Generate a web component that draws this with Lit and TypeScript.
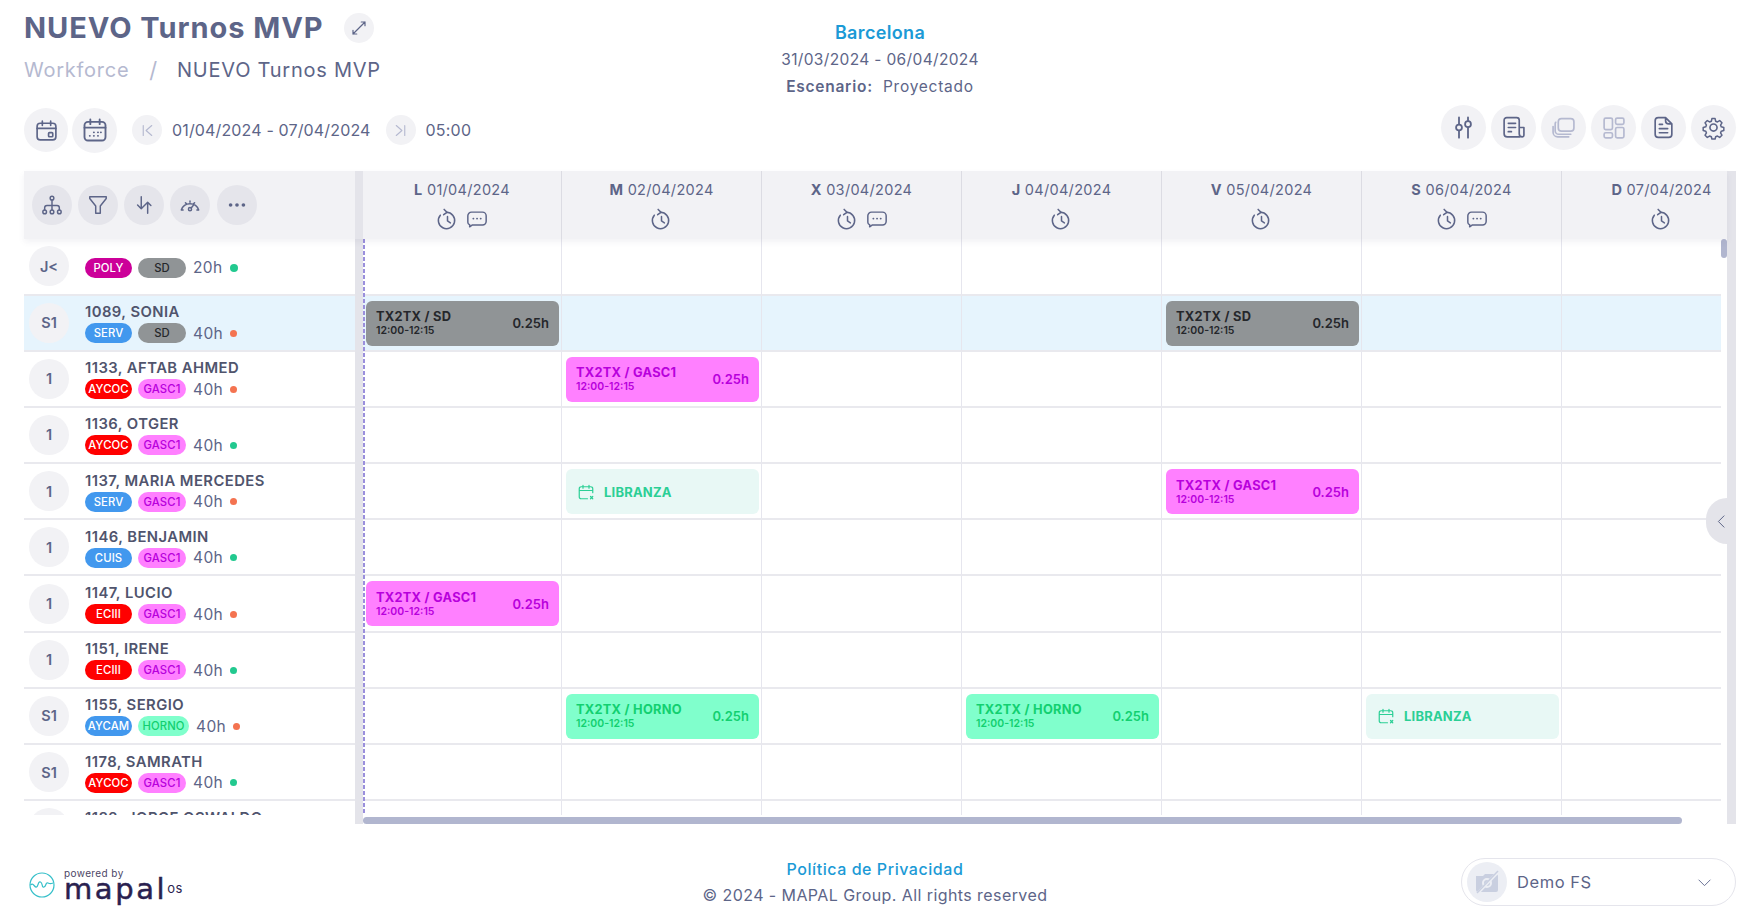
import { LitElement, html, css, svg } from "lit";
import { customElement } from "lit/decorators.js";

const icon = (w: number, h: number, body: unknown, cls = "") =>
  html`<svg class="ic ${cls}" width=${w} height=${h} viewBox="0 0 24 24" fill="none" stroke="currentColor" stroke-width="1.6" stroke-linecap="round" stroke-linejoin="round">${body}</svg>`;

const I = {
  expand: svg`<path d="M4 20 20 4M15 4h5v5M4 15v5h5"/>`,
  cal1: svg`<rect x="3" y="5" width="18" height="16" rx="3"/><path d="M3 10h18M8 3v4M16 3v4"/><rect x="14" y="14" width="4" height="4" rx=".8"/>`,
  cal2: svg`<rect x="3" y="5" width="18" height="16" rx="3"/><path d="M3 10h18M8 3v4M16 3v4M7.500 17h.1M11 17h.1M11 14h.1M14.500 14h.1M14.500 17h.1M17 14h.1"/>`,
  first: svg`<path d="M6 5v14M18 5l-8 7 8 7"/>`,
  last: svg`<path d="M18 5v14M6 5l8 7-8 7"/>`,
  sliders: svg`<path d="M8 3v6M8 15v6M16 3v3M16 12v9"/><circle cx="8" cy="12" r="2.600"/><circle cx="16" cy="9" r="2.600"/>`,
  book: svg`<path d="M18 21H6a3 3 0 0 1-3-3V5a2.500 2.500 0 0 1 2.500-2.500H15A2.500 2.500 0 0 1 17.500 5v13a3 3 0 0 0 3 3 1.500 1.500 0 0 0 1.500-1.500V12h-4.500M7 8h7M7 12h7M7 16h3"/>`,
  layers: svg`<rect x="7" y="3.500" width="15" height="12" rx="3"/><path d="M4.500 7A3 3 0 0 0 4 9v6a3.500 3.500 0 0 0 3.500 3.500H19M2 11v5.500A4.500 4.500 0 0 0 6.500 21H17"/>`,
  grid: svg`<rect x="3" y="3" width="8" height="11" rx="1.500"/><rect x="14" y="3" width="8" height="6" rx="1.500"/><rect x="3" y="17" width="8" height="5" rx="1.500"/><rect x="14" y="12" width="8" height="10" rx="1.500"/>`,
  doc: svg`<path d="M14 2.500H7A3 3 0 0 0 4 5.500v13a3 3 0 0 0 3 3h10a3 3 0 0 0 3-3v-10zM14 2.500v3a3 3 0 0 0 3 3h3M8 9h3M8 13h8M8 17h8"/>`,
  gear: svg`<circle cx="12" cy="12" r="3.400"/><path d="M10.300 2.500h3.400l.6 2.800 1.900.8 2.400-1.500 2.400 2.400-1.500 2.400.8 1.900 2.700.6v3.400l-2.700.6-.8 1.900 1.500 2.400-2.400 2.400-2.400-1.500-1.900.8-.6 2.300h-3.400l-.6-2.300-1.900-.8-2.400 1.500-2.400-2.400 1.500-2.400-.8-1.900-2.700-.6v-3.400l2.700-.6.8-1.900-1.500-2.400 2.400-2.400 2.400 1.500 1.900-.8z" transform="translate(1.200 1.200) scale(.9)"/>`,
  tree: svg`<circle cx="12" cy="4.500" r="2"/><circle cx="4" cy="19.500" r="2"/><circle cx="12" cy="19.500" r="2"/><circle cx="20" cy="19.500" r="2"/><path d="M12 6.500v11M4 17.500V15a2.500 2.500 0 0 1 2.500-2.500h11A2.500 2.500 0 0 1 20 15v2.500"/>`,
  funnel: svg`<path d="M3 3h18v2l-6.500 8v8h-5v-8L3 5z"/>`,
  sort: svg`<path d="M9 3v13M5 12l4 4 4-4M16 21V9M12.500 12.500 16 9l3.500 3.500"/>`,
  gauge: svg`<path d="M2.500 17.500a10 10 0 0 1 19 0h-2M2.500 17.500h2M12 7.500v1.500M7 9.500l1 1M17 9.500l-1 1M13.300 15.200l2.200-2.700"/><circle cx="12" cy="16.500" r="1.700"/>`,
  dots: svg`<g fill="currentColor" stroke="none"><circle cx="5" cy="12" r="2"/><circle cx="12" cy="12" r="2"/><circle cx="19" cy="12" r="2"/></g>`,
  clock: svg`<path d="M11 4.500a8.500 8.500 0 1 1-6.500 3"/><path d="M8.500 1.500 11.500 4.500 8 7"/><path d="M12 9v4.500l3 2"/>`,
  chat: svg`<path d="M6 4.500h12a4 4 0 0 1 4 4v6a4 4 0 0 1-4 4H7l-3 2V18.300a3 3 0 0 1-2-2.800V8.500a4 4 0 0 1 4-4z"/><path d="M8 11.500h.1M12 11.500h.1M16 11.500h.1" stroke-width="2"/>`,
  libr: svg`<path d="M21 13V7.500a2.500 2.500 0 0 0-2.500-2.500h-13A2.500 2.500 0 0 0 3 7.500v11A2.500 2.500 0 0 0 5.500 21H14M3 10h18M8 3v4M16 3v4M18 18l3 3M21 18l-3 3"/>`,
  chev: svg`<path d="M3 8l9 9 9-9"/>`,
  left: svg`<path d="M16 3 7 12l9 9"/>`,
};

type Ev = { d: number; k: "gray" | "pink" | "green" | "off"; t?: string };
type Row = { a: string; n?: string; t1: [string, string]; t2: [string, string]; h: string; dot: "g" | "r"; ev?: Ev[]; sel?: boolean; first?: boolean };

const P: [string, string] = ["GASC1", "pink"];
const SD: [string, string] = ["SD", "gray"];
const rows: Row[] = [
  { a: "J<", t1: ["POLY", "poly"], t2: SD, h: "20h", dot: "g", first: true },
  { a: "S1", n: "1089, SONIA", t1: ["SERV", "blue"], t2: SD, h: "40h", dot: "r", sel: true, ev: [{ d: 0, k: "gray", t: "TX2TX / SD" }, { d: 4, k: "gray", t: "TX2TX / SD" }] },
  { a: "1", n: "1133, AFTAB AHMED", t1: ["AYCOC", "red"], t2: P, h: "40h", dot: "r", ev: [{ d: 1, k: "pink", t: "TX2TX / GASC1" }] },
  { a: "1", n: "1136, OTGER", t1: ["AYCOC", "red"], t2: P, h: "40h", dot: "g" },
  { a: "1", n: "1137, MARIA MERCEDES", t1: ["SERV", "blue"], t2: P, h: "40h", dot: "r", ev: [{ d: 1, k: "off" }, { d: 4, k: "pink", t: "TX2TX / GASC1" }] },
  { a: "1", n: "1146, BENJAMIN", t1: ["CUIS", "blue"], t2: P, h: "40h", dot: "g" },
  { a: "1", n: "1147, LUCIO", t1: ["ECIII", "red"], t2: P, h: "40h", dot: "r", ev: [{ d: 0, k: "pink", t: "TX2TX / GASC1" }] },
  { a: "1", n: "1151, IRENE", t1: ["ECIII", "red"], t2: P, h: "40h", dot: "g" },
  { a: "S1", n: "1155, SERGIO", t1: ["AYCAM", "blue"], t2: ["HORNO", "green"], h: "40h", dot: "r", ev: [{ d: 1, k: "green", t: "TX2TX / HORNO" }, { d: 3, k: "green", t: "TX2TX / HORNO" }, { d: 5, k: "off" }] },
  { a: "S1", n: "1178, SAMRATH", t1: ["AYCOC", "red"], t2: P, h: "40h", dot: "g" },
  { a: "S1", n: "1182, JORGE OSWALDO", t1: ["SERV", "blue"], t2: P, h: "40h", dot: "g" },
];
const days: [string, string, boolean][] = [
  ["L", "01/04/2024", true], ["M", "02/04/2024", false], ["X", "03/04/2024", true], ["J", "04/04/2024", false],
  ["V", "05/04/2024", false], ["S", "06/04/2024", true], ["D", "07/04/2024", false],
];

@customElement("app-root")
export class AppRoot extends LitElement {
  static styles = css`
    :host { display: block; width: 1757px; height: 912px; overflow: hidden; background: #fff; color: #5d6588; font-family: Inter, "Noto Sans", sans-serif; position: relative; }
    * { box-sizing: border-box; }
    .ic { display: block; flex: none; }
    .page { padding: 0 21px 0 24px; display: flex; flex-direction: column; }
    .top { display: grid; grid-template-columns: 1fr auto 1fr; height: 108px; }
    .title { display: flex; align-items: center; height: 55px; }
    h1 { margin: 0; font-size: 29px; font-weight: 700; letter-spacing: .95px; color: #5d6588; line-height: 55px; }
    .round { border-radius: 50%; background: #f2f2f5; display: flex; align-items: center; justify-content: center; flex: none; }
    .exp { width: 30px; height: 30px; margin-left: 20px; }
    .crumb { display: flex; align-items: center; height: 30px; font-size: 20px; letter-spacing: .75px; }
    .crumb .w { color: #b5b9d0; }
    .crumb .s { color: #b5b9d0; margin: 0 19px 0 20px; font-size: 22px; }
    .center { text-align: center; padding-top: 21px; font-size: 15.500px; letter-spacing: .35px; }
    .center div { line-height: 27px; height: 27px; }
    .center .bcn { color: #1b9ad6; font-size: 18px; font-weight: 600; line-height: 24px; height: 25px; }
    .center .esc { letter-spacing: .75px; }
    .center b { font-weight: 600; margin-right: 5px; }
    .bar { display: flex; justify-content: space-between; height: 63px; align-items: flex-start; }
    .tools { display: flex; align-items: center; height: 44px; }
    .b44 { width: 44px; height: 44px; }
    .b45 { width: 45px; height: 45px; }
    .b30 { width: 30px; height: 30px; color: #b5b9d0; }
    .tools .b45 { margin-left: 4px; }
    .tools .date { font-size: 16px; letter-spacing: .15px; margin: 0 15px 0 10px; }
    .tools .d1 { margin-left: 15px; }
    .tools .time { font-size: 16px; letter-spacing: .2px; margin-left: 10px; }
    .right { display: flex; gap: 5px; margin-top: -3px; }
    .light { color: #b5b9d0; }

    .table { display: flex; height: 653px; position: relative; }
    .main { width: 1703px; display: flex; flex-direction: column; }
    .track { width: 9px; background: #e4e4ea; }
    .head { display: grid; grid-template-columns: 331px 8px 199px repeat(6, 200px); height: 68px; overflow: hidden; background: #f2f2f5; flex: none; position: relative; z-index: 2; box-shadow: 0 3px 6px rgba(90, 95, 130, .08); }
    .acts { display: flex; align-items: center; padding-left: 8px; gap: 6px; }
    .acts .round { width: 40px; height: 40px; background: #e5e5eb; }
    .acts .round:last-child { margin-left: 1px; }
    .sep { background: #e4e4ea; }
    .hd { border-right: 1px solid #dcdce3; display: flex; flex-direction: column; align-items: center; padding-top: 10px; font-size: 14.500px; letter-spacing: .3px; line-height: 18px; min-width: 0; white-space: nowrap; }
    .hd b { font-weight: 700; }
    .hd .ics { display: flex; gap: 7px; margin-top: 10px; align-items: center; height: 20px; }
    .body { display: flex; height: 576px; flex: none; }
    .rows { width: 1697px; overflow: hidden; position: relative; }
    .vbar { width: 6px; }
    .thumb { height: 19px; background: #b1b6cf; border-radius: 3px; }
    .dash { position: absolute; left: 339px; top: 0; bottom: 0; width: 2px; background: repeating-linear-gradient(to bottom, #9a8fdc 0 4px, transparent 4px 6px); z-index: 1; }
    .row { display: grid; grid-template-columns: 331px 8px 199px repeat(6, 200px); height: 56.200px; }
    .row.first { height: 56.500px; }
    .who { display: flex; align-items: center; padding-left: 5px; gap: 16px; border-bottom: 2px solid #e9e9ee; }
    .av { width: 40px; height: 40px; font-size: 14.500px; font-weight: 600; color: #5d6588; }
    .info { display: flex; flex-direction: column; min-width: 0; padding-top: 1px; }
    .name { font-size: 14.800px; font-weight: 600; color: #50546d; letter-spacing: .45px; line-height: 19px; white-space: nowrap; }
    .tags { display: flex; align-items: center; height: 20px; margin-top: 1px; }
    .first .tags { margin-top: 2px; }
    .tag { height: 20px; border-radius: 10px; display: flex; align-items: center; justify-content: center; font-size: 11.300px; font-weight: 500; letter-spacing: .1px; width: 47px; flex: none; }
    .tag + .tag { width: 48px; margin-left: 6px; }
    .tag.green { width: 51px; }
    .poly { background: #cc0099; color: #fff; }
    .blue { background: #4298ee; color: #fff; }
    .red { background: #ff0000; color: #fff; }
    .gray { background: #909496; color: #25272b; }
    .pink { background: #ff80ff; color: #b800dc; }
    .green { background: #80ffcc; color: #12d070; }
    .hrs { font-size: 15.500px; letter-spacing: .4px; margin-left: 7px; }
    .dot { width: 7px; height: 7px; border-radius: 50%; margin-left: 7px; flex: none; }
    .dot.g { background: #22c98f; }
    .dot.r { background: #f47350; }
    .first .dot { width: 8px; height: 8px; }
    .sel .who, .sel .cell { background: #e6f4fd; }
    .cell { border-bottom: 2px solid #e9e9ee; border-right: 1px solid #e6e6ee; padding: 5px 2px 4px 4px; min-width: 0; }
    .sep + .cell { padding-left: 3px; }
    .ev { height: 45px; border-radius: 6px; display: flex; align-items: center; justify-content: space-between; padding: 0 10px; white-space: nowrap; }
    .ev .tt { font-size: 12.800px; font-weight: 700; letter-spacing: .25px; line-height: 15px; }
    .ev .tm { font-size: 10.500px; font-weight: 600; line-height: 13px; }
    .ev .hr { font-size: 13px; font-weight: 600; }
    .off { background: #e8f8f5; color: #2bcf95; justify-content: flex-start; padding-left: 11px; gap: 9px; font-size: 13px; font-weight: 700; letter-spacing: .2px; }
    .bottom { height: 9px; display: flex; flex: none; }
    .bl { width: 331px; }
    .bs { width: 8px; background: #e4e4ea; }
    .hs { width: 1319px; height: 7px; margin-top: 2px; background: #b1b6cf; border-radius: 4px; }
    .handle { position: absolute; left: 1682px; top: 327px; width: 21px; height: 46px; background: #e4e4ea; border-radius: 23px 0 0 23px; z-index: 3; display: flex; align-items: center; padding-left: 8px; }

    .foot { display: grid; grid-template-columns: 1fr auto 1fr; height: 88px; }
    .logo { display: flex; align-items: center; padding: 40px 0 0 5px; height: 82px; gap: 9px; align-self: start; }
    .brand { position: relative; display: flex; flex-direction: column; color: #2a1f4f; }
    .pw { font-size: 10px; line-height: 11px; letter-spacing: .4px; color: #4c4666; }
    .mp { display: flex; align-items: flex-start; margin-top: -3px; }
    .mp .m { font-family: "DejaVu Sans", sans-serif; font-size: 29px; line-height: 27px; letter-spacing: 2.600px; -webkit-text-stroke: .5px #2a1f4f; }
    .mp .o { font-size: 13px; line-height: 18px; letter-spacing: .4px; margin: 3px 0 0 0; }
    .links { text-align: center; padding: 33px 10px 0 0; font-size: 16px; }
    .links .pv { color: #1b9ad6; font-weight: 500; line-height: 24px; height: 25px; letter-spacing: .55px; }
    .links .cp { line-height: 26px; letter-spacing: .42px; }
    .acct { justify-self: end; width: 275px; height: 48px; margin-top: 34px; border: 1px solid #e5e5ec; border-radius: 24px; display: flex; align-items: center; padding: 0 23px 0 5px; }
    .acct .ph { width: 40px; height: 40px; background: #eceef4; color: #c9cfe0; }
    .acct .nm { margin-left: 10px; font-size: 16.500px; letter-spacing: .55px; flex: 1; }
    .chev { color: #6b7396; }
  `;

  private ev(e: Ev) {
    if (e.k === "off") return html`<div class="ev off">${icon(18, 18, I.libr)}<span>LIBRANZA</span></div>`;
    return html`<div class="ev ${e.k}"><div><div class="tt">${e.t}</div><div class="tm">12:00-12:15</div></div><div class="hr">0.25h</div></div>`;
  }

  render() {
    return html`<div class="page">
      <div class="top">
        <div>
          <div class="title"><h1>NUEVO Turnos MVP</h1><div class="round exp">${icon(18, 18, I.expand)}</div></div>
          <div class="crumb"><span class="w">Workforce</span><span class="s">/</span><span>NUEVO Turnos MVP</span></div>
        </div>
        <div class="center">
          <div class="bcn">Barcelona</div>
          <div>31/03/2024 - 06/04/2024</div>
          <div class="esc"><b>Escenario:</b> Proyectado</div>
        </div>
        <div></div>
      </div>
      <div class="bar">
        <div class="tools">
          <div class="round b44">${icon(25, 25, I.cal1)}</div>
          <div class="round b45">${icon(28, 28, I.cal2)}</div>
          <div class="round b30 d1">${icon(17, 17, I.first)}</div>
          <div class="date">01/04/2024 - 07/04/2024</div>
          <div class="round b30">${icon(17, 17, I.last)}</div>
          <div class="time">05:00</div>
        </div>
        <div class="right">
          <div class="round b45">${icon(27, 27, I.sliders)}</div>
          <div class="round b45">${icon(25, 25, I.book)}</div>
          <div class="round b45 light">${icon(25, 25, I.layers)}</div>
          <div class="round b45 light">${icon(25, 25, I.grid)}</div>
          <div class="round b45">${icon(25, 25, I.doc)}</div>
          <div class="round b45">${icon(25, 25, I.gear)}</div>
        </div>
      </div>
      <div class="table">
        <div class="main">
          <div class="head">
            <div class="acts">
              <div class="round">${icon(22, 22, I.tree)}</div>
              <div class="round">${icon(22, 22, I.funnel)}</div>
              <div class="round">${icon(22, 22, I.sort)}</div>
              <div class="round">${icon(22, 22, I.gauge)}</div>
              <div class="round">${icon(22, 22, I.dots)}</div>
            </div>
            <div class="sep"></div>
            ${days.map(([l, d, c]) => html`<div class="hd"><div><b>${l}</b> ${d}</div><div class="ics">${icon(23, 23, I.clock)}${c ? icon(22, 22, I.chat) : ""}</div></div>`)}
          </div>
          <div class="body">
            <div class="rows">
              <div class="dash"></div>
              ${rows.map((r) => html`<div class="row ${r.first ? "first" : ""} ${r.sel ? "sel" : ""}">
                <div class="who">
                  <div class="round av">${r.a}</div>
                  <div class="info">
                    ${r.n ? html`<div class="name">${r.n}</div>` : ""}
                    <div class="tags">
                      <div class="tag ${r.t1[1]}">${r.t1[0]}</div>
                      <div class="tag ${r.t2[1]}">${r.t2[0]}</div>
                      <div class="hrs">${r.h}</div>
                      <div class="dot ${r.dot}"></div>
                    </div>
                  </div>
                </div>
                <div class="sep"></div>
                ${days.map((_, i) => {
                  const e = r.ev?.find((x) => x.d === i);
                  return html`<div class="cell">${e ? this.ev(e) : ""}</div>`;
                })}
              </div>`)}
            </div>
            <div class="vbar"><div class="thumb"></div></div>
          </div>
          <div class="bottom"><div class="bl"></div><div class="bs"></div><div class="hs"></div></div>
        </div>
        <div class="track"></div>
        <div class="handle">${icon(15, 15, I.left)}</div>
      </div>
      <div class="foot">
        <div class="logo">
          <svg class="ic" width="26" height="26" viewBox="0 0 26 26" fill="none" stroke="#35bfc9" stroke-width="1.200"><circle cx="13" cy="13" r="12"/><path d="M1.500 13c3-3 4 3 6 2s1.500-6 4-5 1 6 3.500 5 1.500-5 4-4 2 1 5 0"/></svg>
          <div class="brand">
            <div class="pw">powered by</div>
            <div class="mp"><span class="m">mapal</span><span class="o">os</span></div>
          </div>
        </div>
        <div class="links">
          <div class="pv">Política de Privacidad</div>
          <div class="cp">© 2024 - MAPAL Group. All rights reserved</div>
        </div>
        <div class="acct">
          <div class="round ph"><svg class="ic" width="28" height="28" viewBox="0 0 28 28"><path d="M3 8h7l2-2h11a2 2 0 0 1 2 2v14a2 2 0 0 1-2 2H5a2 2 0 0 1-2-2z" fill="currentColor"/><circle cx="14" cy="15" r="4" fill="none" stroke="#eceef4" stroke-width="2"/><path d="M3 27 26 3" stroke="#eceef4" stroke-width="3"/><path d="M4 25 25 3" stroke="currentColor" stroke-width="1.500"/></svg></div>
          <div class="nm">Demo FS</div>
          <div class="chev">${icon(15, 15, I.chev)}</div>
        </div>
      </div>
    </div>`;
  }
}
